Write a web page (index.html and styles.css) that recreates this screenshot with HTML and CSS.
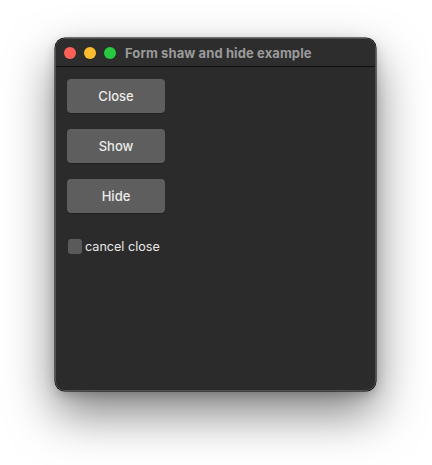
FILE: index.html
```html
<!DOCTYPE html>
<html>
<head>
<meta charset="utf-8">
<link rel="stylesheet" href="styles.css">
</head>
<body>
<div class="window">
  <div class="titlebar">
    <span class="light red"></span>
    <span class="light yellow"></span>
    <span class="light green"></span>
    <span class="title">Form shaw and hide example</span>
  </div>
  <div class="content">
    <button class="btn">Close</button>
    <button class="btn">Show</button>
    <button class="btn">Hide</button>
    <label class="check"><span class="box"></span>cancel close</label>
  </div>
</div>
</body>
</html>
```
FILE: styles.css
```css
html, body {
  margin: 0;
  padding: 0;
  background: #ffffff;
  width: 432px;
  height: 465px;
  overflow: hidden;
}
body {
  padding: 38px 0 0 55px;
  box-sizing: border-box;
  font-family: Inter, "Noto Sans", sans-serif;
}
.window {
  width: 321px;
  height: 353px;
  box-sizing: border-box;
  background: #2b2b2b;
  border: 1px solid #505050;
  border-radius: 10px;
  box-shadow: 0 0 0 0.5px #000, 0 22px 48px rgba(0,0,0,0.5), 0 4px 12px rgba(0,0,0,0.2);
  overflow: hidden;
  display: flex;
  flex-direction: column;
}
.titlebar {
  height: 27px;
  flex: none;
  border-bottom: 1px solid #0e0e0e;
  display: flex;
  align-items: center;
  padding-left: 8px;
  gap: 8px;
  background: #2d2d2d;
}
.light {
  width: 12px;
  height: 12px;
  border-radius: 50%;
  flex: none;
}
.red { background: #fe5f57; }
.yellow { background: #febc2e; }
.green { background: #28c840; }
.title {
  margin-left: 1px;
  color: #9a9a9a;
  font-size: 13px;
  font-weight: 700;
  letter-spacing: 0.1px;
}
.content {
  display: flex;
  flex-direction: column;
  align-items: flex-start;
  padding: 12px 0 0 11px;
  gap: 16px;
}
.btn {
  width: 98px;
  height: 34px;
  border: none;
  border-radius: 4px;
  background: #5e5e5e;
  color: #ececec;
  font-family: Inter, "Noto Sans", sans-serif;
  font-size: 13px;
  font-weight: 500;
  padding: 0;
  box-shadow: 0 1px 1px rgba(0,0,0,0.25);
}
.check {
  margin-top: 10px;
  display: flex;
  align-items: center;
  gap: 3px;
  color: #e8e8e8;
  font-size: 12.6px;
  font-weight: 400;
}
.box {
  width: 14px;
  height: 15px;
  border-radius: 3px;
  background: #5a5a5a;
  margin-left: 1px;
}
```
